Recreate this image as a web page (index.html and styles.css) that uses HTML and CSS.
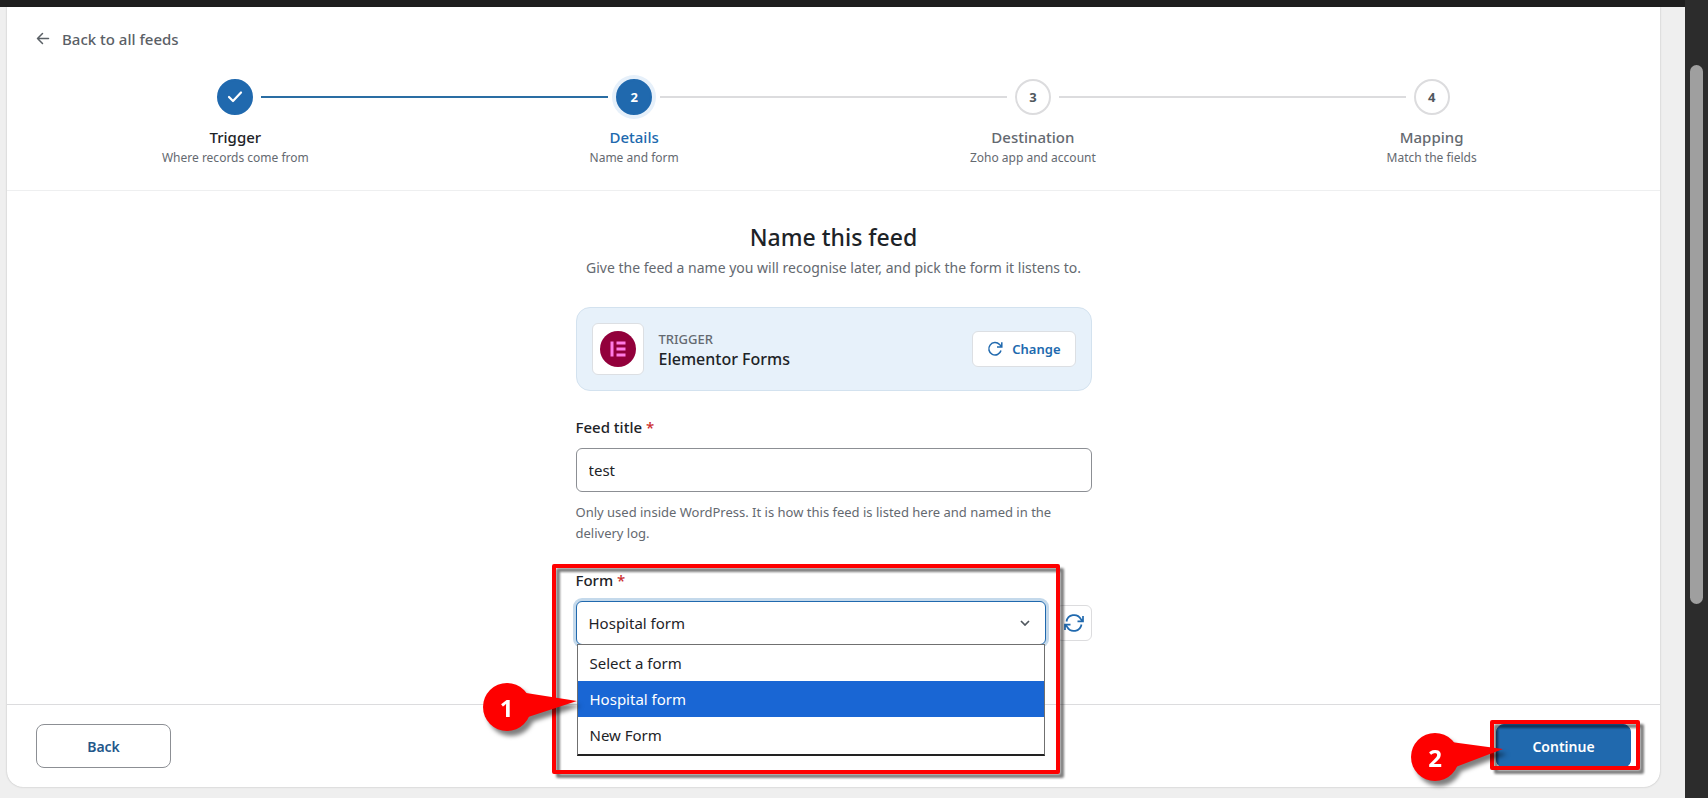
FILE: index.html
```html
<!DOCTYPE html>
<html lang="en">
<head>
    <meta charset="UTF-8">
    <meta name="viewport" content="width=device-width, initial-scale=1.0">
    <title>Name this feed</title>
    <link rel="stylesheet" href="styles.css">
</head>
<body>
    <div class="window">
        <div class="topbar"></div>
        <main class="card">
            <header class="card-header">
                <a class="back-link" href="#">
                    <svg width="14" height="14" viewBox="0 0 14 14" fill="none" stroke="currentColor" stroke-width="1.5" stroke-linecap="round" stroke-linejoin="round"><path d="M12.5 6.500H1.500M6.500 1.500L1.500 6.500l5 5"/></svg>
                    Back to all feeds
                </a>
                <ol class="steps">
                    <li class="step complete">
                        <div class="step-track">
                            <span class="line hidden"></span>
                            <span class="dot"><svg width="18" height="18" viewBox="0 0 18 18" fill="none" stroke="currentColor" stroke-width="2.200" stroke-linecap="round" stroke-linejoin="round"><path d="M3 9l4 4L15 4.500"/></svg></span>
                            <span class="line done"></span>
                        </div>
                        <div class="step-title">Trigger</div>
                        <div class="step-text">Where records come from</div>
                    </li>
                    <li class="step current">
                        <div class="step-track">
                            <span class="line done"></span>
                            <span class="dot">2</span>
                            <span class="line"></span>
                        </div>
                        <div class="step-title">Details</div>
                        <div class="step-text">Name and form</div>
                    </li>
                    <li class="step">
                        <div class="step-track">
                            <span class="line"></span>
                            <span class="dot">3</span>
                            <span class="line"></span>
                        </div>
                        <div class="step-title">Destination</div>
                        <div class="step-text">Zoho app and account</div>
                    </li>
                    <li class="step">
                        <div class="step-track">
                            <span class="line"></span>
                            <span class="dot">4</span>
                            <span class="line hidden"></span>
                        </div>
                        <div class="step-title">Mapping</div>
                        <div class="step-text">Match the fields</div>
                    </li>
                </ol>
            </header>

            <section class="content">
                <h1>Name this feed</h1>
                <p class="intro">Give the feed a name you will recognise later, and pick the form it listens to.</p>

                <div class="trigger">
                    <div class="trigger-logo">
                        <svg width="36" height="36" viewBox="0 0 36 36">
                            <circle cx="18" cy="18" r="18" fill="#92003b"/>
                            <path fill="#ff7be5" d="M10.500 10.500h3v15h-3zM16.500 10.500h9V13.500h-9zM16.500 16.500h9v3h-9zM16.500 22.500h9v3h-9z"/>
                        </svg>
                    </div>
                    <div class="trigger-info">
                        <div class="trigger-label">TRIGGER</div>
                        <div class="trigger-name">Elementor Forms</div>
                    </div>
                    <button type="button" class="change-btn">
                        <svg width="16" height="16" viewBox="0 0 16 16" fill="none" stroke="currentColor" stroke-width="1.500"><path d="M14 9.500A6.200 6.200 0 1 1 12.600 3.600L14.500 5.500M14.800 1.200v4.800h-4.800"/></svg>
                        Change
                    </button>
                </div>

                <div class="field">
                    <label for="feedTitle">Feed title <span class="required">*</span></label>
                    <input type="text" id="feedTitle" value="test">
                    <p class="help">Only used inside WordPress. It is how this feed is listed here and named in the delivery log.</p>
                </div>

                <div class="field">
                    <label for="formSelect">Form <span class="required">*</span></label>
                    <div class="select-row">
                        <div class="select-wrap">
                            <select id="formSelect">
                                <option>Select a form</option>
                                <option selected>Hospital form</option>
                                <option>New Form</option>
                            </select>
                            <svg class="chevron" width="10" height="6" viewBox="0 0 10 6" fill="none" stroke="currentColor" stroke-width="1.700"><path d="M1 1l4 4 4-4"/></svg>
                            <ul class="menu">
                                <li>Select a form</li>
                                <li class="selected">Hospital form</li>
                                <li>New Form</li>
                            </ul>
                        </div>
                        <button type="button" class="refresh-btn" aria-label="Refresh forms">
                            <svg width="20" height="18" viewBox="0 0 20 18" fill="none" stroke="currentColor" stroke-width="1.700"><path d="M2.500 7.500A7.700 7.700 0 0 1 16.800 5L18.500 7M19 2v5.300h-5.500M17.500 10.500A7.700 7.700 0 0 1 3.200 13L1.500 11M1 16v-5.300h5.500"/></svg>
                        </button>
                    </div>
                    <div class="mark mark-form"></div>
                    <div class="pin pin-form">
                        <svg width="118" height="50" viewBox="0 0 118 50" fill="#fe0000"><circle cx="24" cy="25" r="24"/><path d="M40 10.500L94 19 42 36z"/></svg>
                        <span>1</span>
                    </div>
                </div>
            </section>

            <footer class="card-footer">
                <button type="button" class="btn">Back</button>
                <div class="continue">
                    <button type="button" class="btn primary">Continue</button>
                    <div class="mark mark-continue"></div>
                    <div class="pin pin-continue">
                        <svg width="118" height="50" viewBox="0 0 118 50" fill="#fe0000"><circle cx="24" cy="25" r="24"/><path d="M40 10L92 17 42 36z"/></svg>
                        <span>2</span>
                    </div>
                </div>
            </footer>
        </main>
    </div>
    <div class="scrollbar"><div class="thumb"></div></div>
</body>
</html>
```

FILE: styles.css
```css
* {
    box-sizing: border-box;
}
body {
    display: flex;
    min-height: 100vh;
    margin: 0;
    font-family: "Noto Sans", "Open Sans", sans-serif;
    font-size: 15px;
    line-height: 22px;
    color: #1d2327;
    background-color: #efefef;
}
button, input, select {
    font-family: inherit;
    color: inherit;
    margin: 0;
}
.window {
    flex: 1;
    min-width: 0;
}
.topbar {
    height: 7px;
    background-color: #1e1e1e;
}
.card {
    margin: 0 25px 11px 7px;
    background-color: #fff;
    border-radius: 0 0 16px 16px;
    box-shadow: 0 0 2px rgba(0, 0, 0, 0.25);
}
.card-header {
    padding: 21px 29px 24px;
    border-bottom: 1px solid #eeeff0;
}
.back-link {
    display: flex;
    align-items: center;
    gap: 12px;
    width: fit-content;
    font-weight: 500;
    color: #5a6066;
    text-decoration: none;
}
.steps {
    display: flex;
    list-style: none;
    margin: 29px 0 0;
    padding: 0;
}
.step {
    flex: 1;
    text-align: center;
    color: #646970;
}
.step-track {
    display: flex;
    align-items: center;
    gap: 8px;
    margin-bottom: 11px;
}
.line {
    flex: 1;
    height: 2px;
    background-color: #dcdcde;
}
/* lines of neighbouring steps meet at the column edge */
.line.done {
    background-color: #2a6da3;
}
.line.hidden {
    visibility: hidden;
}
.dot {
    display: flex;
    align-items: center;
    justify-content: center;
    width: 36px;
    height: 36px;
    border: 2px solid #dcdcde;
    border-radius: 50%;
    font-size: 13px;
    font-weight: 700;
    color: #50575e;
}
.complete .dot, .current .dot {
    border-color: #2069ae;
    background-color: #2069ae;
    color: #fff;
}
.current .dot {
    box-shadow: 0 0 0 4px #e6f0fa;
}
.step-title {
    font-weight: 500;
}
.complete .step-title {
    color: #1d2327;
}
.current .step-title {
    color: #2069ae;
}
.step-text {
    font-size: 12px;
    line-height: 20px;
    margin-bottom: -2px;
}
.content {
    width: 100%;
    max-width: 516px;
    margin: 0 auto;
    padding: 29px 0 59px;
}
h1 {
    margin: 0 0 3px;
    font-size: 23px;
    line-height: 34px;
    font-weight: 500;
    text-align: center;
}
.intro {
    margin: 0 0 28px;
    font-size: 14px;
    text-align: center;
    color: #646970;
}
.trigger {
    display: flex;
    align-items: center;
    gap: 15px;
    height: 84px;
    margin-bottom: 25px;
    padding: 0 15px;
    border: 1px solid #d3e2ef;
    border-radius: 14px;
    background-color: #e7f1fa;
}
.trigger-logo {
    display: flex;
    align-items: center;
    justify-content: center;
    width: 52px;
    height: 52px;
    border: 1px solid #dcdfe3;
    border-radius: 6px;
    background-color: #fff;
}
.trigger-info {
    flex: 1;
}
.trigger-label {
    font-size: 13px;
    line-height: 20px;
    font-weight: 500;
    color: #646970;
}
.trigger-name {
    font-size: 16px;
    line-height: 20px;
    font-weight: 500;
}
.change-btn {
    display: flex;
    align-items: center;
    justify-content: center;
    gap: 9px;
    height: 36px;
    padding: 0 14px;
    border: 1px solid #dcdfe3;
    border-radius: 6px;
    background-color: #fff;
    font-size: 13px;
    font-weight: 600;
    color: #2069ae;
}
.field {
    position: relative;
    margin-top: 25px;
}
.field label {
    display: block;
    margin-bottom: 10px;
    font-weight: 500;
}
.required {
    color: #cc2f2f;
}
.field input, .field select {
    display: block;
    width: 100%;
    height: 44px;
    padding: 0 12px;
    border: 1px solid #8c8f94;
    border-radius: 6px;
    outline: none;
    background-color: #fff;
    font-size: 15px;
}
.help {
    margin: 10px 0 0;
    font-size: 13px;
    line-height: 21px;
    color: #646970;
}
.select-row {
    display: flex;
    align-items: center;
    gap: 10px;
}
.select-wrap {
    position: relative;
    flex: 1;
}
.field select {
    appearance: none;
    border-color: #2069ae;
    box-shadow: 0 0 0 3px #c4d9eb;
}
.chevron {
    position: absolute;
    right: 16px;
    top: 19px;
    color: #50575e;
}
.menu {
    position: absolute;
    z-index: 1;
    top: 43px;
    left: 1px;
    right: 1px;
    margin: 0;
    padding: 0 0 1px;
    list-style: none;
    border: 1px solid #707070;
    border-bottom: 2px solid #222;
    background-color: #fff;
}
.menu li {
    padding: 0 12px;
    line-height: 36px;
}
.menu .selected {
    background-color: #1966d4;
    color: #fff;
}
.refresh-btn {
    display: flex;
    align-items: center;
    justify-content: center;
    width: 36px;
    height: 36px;
    padding: 0;
    border: 1px solid #dcdcde;
    border-radius: 6px;
    background-color: #fff;
    color: #2069ae;
}
.card-footer {
    display: flex;
    align-items: center;
    justify-content: space-between;
    padding: 19px 29px;
    border-top: 1px solid #dcdcde;
}
.btn {
    display: block;
    min-width: 135px;
    height: 44px;
    border: 1px solid #8c8f94;
    border-radius: 8px;
    background-color: #fff;
    font-size: 14px;
    font-weight: 600;
    color: #23578a;
}
.btn.primary {
    border-color: #2069ae;
    background-color: #2069ae;
    color: #fff;
}
.continue {
    position: relative;
}
/* callouts drawn over the page */
.mark {
    position: absolute;
    z-index: 2;
    border: 4px solid #fe0000;
    border-radius: 2px;
    filter: drop-shadow(4px 4px 1px rgba(0, 0, 0, 0.5));
    pointer-events: none;
}
.mark-form {
    top: -5px;
    left: -24px;
    right: 32px;
    height: 210px;
}
.mark-continue {
    top: -4px;
    bottom: -2px;
    left: -6px;
    right: -9px;
}
.pin {
    position: absolute;
    z-index: 3;
    width: 118px;
    height: 50px;
    filter: drop-shadow(4px 5px 2px rgba(0, 0, 0, 0.5));
    pointer-events: none;
}
.pin svg {
    display: block;
}
.pin span {
    position: absolute;
    top: 0;
    left: 0;
    width: 48px;
    font-family: "Noto Sans", sans-serif;
    font-size: 24px;
    line-height: 52px;
    font-weight: 700;
    text-align: center;
    color: #fff;
}
.pin-form {
    top: 113px;
    left: -93px;
}
.pin-continue {
    top: 8px;
    left: -85px;
}
.scrollbar {
    width: 23px;
    padding: 65px 5px 0;
    background-color: #2c2c2c;
}
.thumb {
    height: 539px;
    border-radius: 7px;
    background-color: #9f9f9f;
}
```
